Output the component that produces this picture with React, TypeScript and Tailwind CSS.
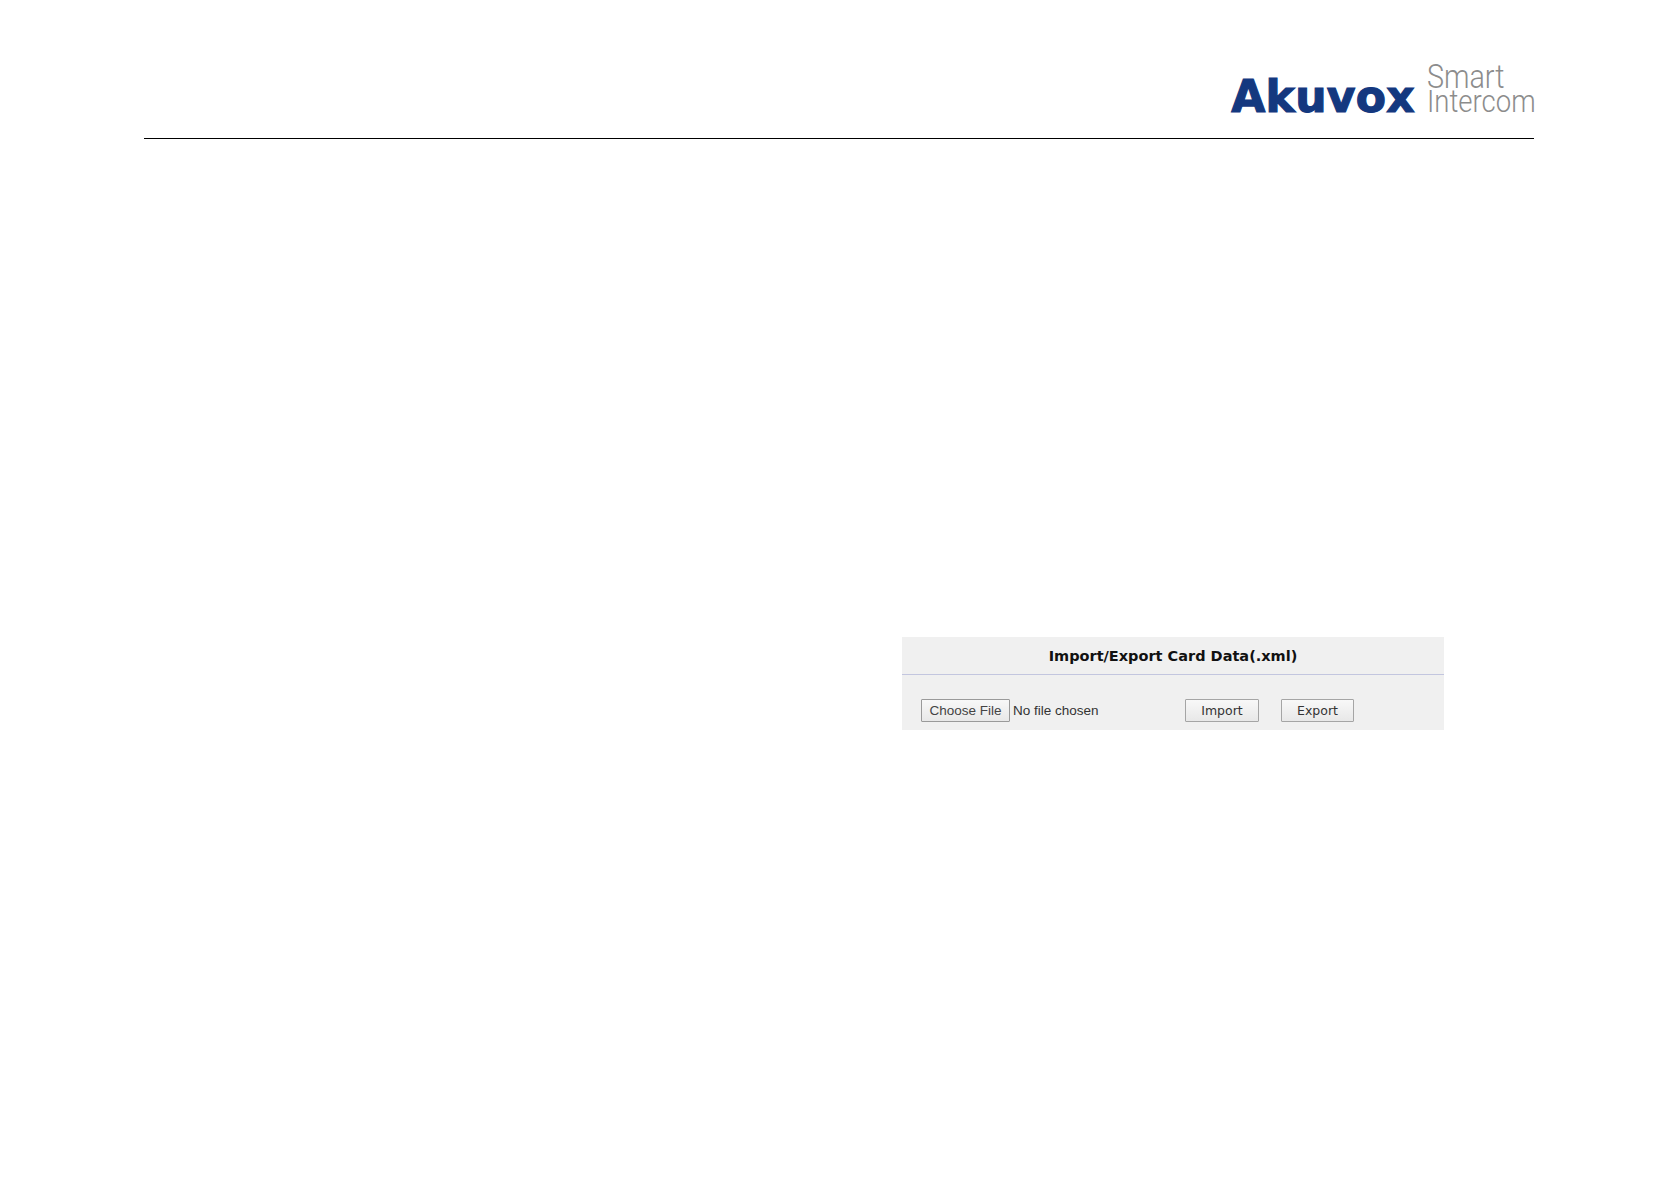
export default function App() {
  return (
    <div className="min-h-[1185px] bg-white pl-[144px] pr-[144px] pt-[62px]">
      {/* Header */}
      <header className="flex h-[77px] items-start justify-end border-b border-black">
        <div className="flex items-start">
          <span className="mt-[10px] font-['DejaVu_Sans'] text-[44px] font-bold leading-[50px] tracking-[0.3px] text-[#14387f] [-webkit-text-stroke:1.2px_#14387f]">
            Akuvox
          </span>
          <div className="ml-[12px] mr-[1px] mt-[3px] flex w-[106px] flex-col font-['Roboto'] font-light text-[#8c8c8c]">
            <span className="origin-left scale-x-[0.87] whitespace-nowrap text-[33px] leading-[24px]">Smart</span>
            <span className="origin-left scale-x-[0.86] whitespace-nowrap text-[32px] leading-[24px]">Intercom</span>
          </div>
        </div>
      </header>

      {/* Import / export panel */}
      <section className="ml-[758px] mt-[498px] h-[93px] w-[542px] bg-[#f0f0f0]">
        <h2 className="h-[38px] border-b border-[#c3c6df] text-center font-['DejaVu_Sans'] text-[14.5px] font-bold leading-[39px] text-[#111]">
          Import/Export Card Data(.xml)
        </h2>
        <div className="flex items-center pl-[19px] pt-[24px]">
          <button className="h-[23px] w-[89px] rounded-[1px] border border-[#9a9a9a] bg-gradient-to-b from-[#f8f8f8] to-[#e8e8e8] font-['Liberation_Sans'] text-[13.5px] leading-[20px] text-[#444]">
            Choose File
          </button>
          <span className="ml-[3px] mt-[1px] w-[172px] font-['Liberation_Sans'] text-[13.5px] text-[#333]">
            No file chosen
          </span>
          <button className="h-[23px] w-[74px] rounded-[1px] border border-[#a5a5a5] bg-gradient-to-b from-[#f8f8f8] to-[#e8e8e8] font-['DejaVu_Sans'] text-[12.5px] leading-[22px] text-[#333]">
            Import
          </button>
          <button className="ml-[22px] h-[23px] w-[73px] rounded-[1px] border border-[#a5a5a5] bg-gradient-to-b from-[#f8f8f8] to-[#e8e8e8] font-['DejaVu_Sans'] text-[12.5px] leading-[22px] text-[#333]">
            Export
          </button>
        </div>
      </section>
    </div>
  );
}
